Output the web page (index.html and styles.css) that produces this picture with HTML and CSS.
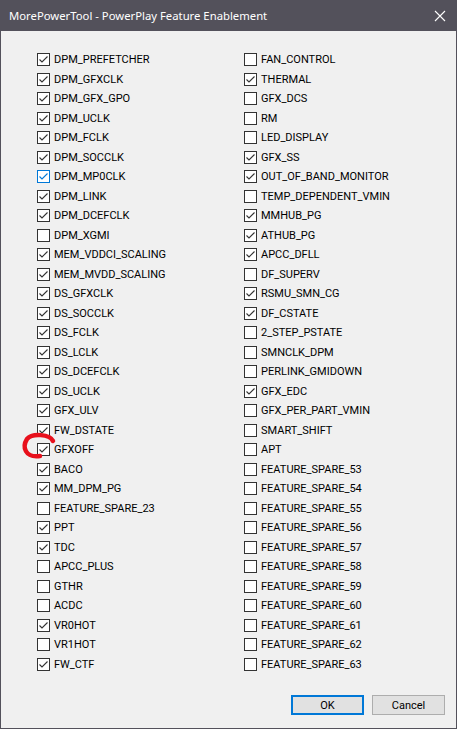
FILE: index.html
```html
<!doctype html>
<html lang="en">
<head>
  <meta charset="UTF-8" />
  <meta name="viewport" content="width=device-width, initial-scale=1.0" />
  <title>MorePowerTool - PowerPlay Feature Enablement</title>
  <link rel="stylesheet" href="styles.css">
</head>
<body>
<svg width="0" height="0" class="defs">
  <symbol id="tick" viewBox="0 0 11 11">
    <path d="M1.5 5.5 L4 8 L9.5 2.5" fill="none" stroke="currentColor" stroke-width="1.1" />
  </symbol>
</svg>
<div class="window">
  <div class="titlebar">
    <span class="title">MorePowerTool - PowerPlay Feature Enablement</span>
    <svg class="close" width="12" height="12" viewBox="0 0 12 12">
      <path d="M1 1 L11 11 M11 1 L1 11" stroke="#fff" stroke-width="1.1" />
    </svg>
  </div>
  <div class="features">
    <div class="column">
      <label class="item"><span class="cb on"><svg><use href="#tick"/></svg></span>DPM_PREFETCHER</label>
      <label class="item"><span class="cb on"><svg><use href="#tick"/></svg></span>DPM_GFXCLK</label>
      <label class="item"><span class="cb on"><svg><use href="#tick"/></svg></span>DPM_GFX_GPO</label>
      <label class="item"><span class="cb on"><svg><use href="#tick"/></svg></span>DPM_UCLK</label>
      <label class="item"><span class="cb on"><svg><use href="#tick"/></svg></span>DPM_FCLK</label>
      <label class="item"><span class="cb on"><svg><use href="#tick"/></svg></span>DPM_SOCCLK</label>
      <label class="item"><span class="cb on hover"><svg><use href="#tick"/></svg></span>DPM_MP0CLK</label>
      <label class="item"><span class="cb on"><svg><use href="#tick"/></svg></span>DPM_LINK</label>
      <label class="item"><span class="cb on"><svg><use href="#tick"/></svg></span>DPM_DCEFCLK</label>
      <label class="item"><span class="cb"></span>DPM_XGMI</label>
      <label class="item"><span class="cb on"><svg><use href="#tick"/></svg></span>MEM_VDDCI_SCALING</label>
      <label class="item"><span class="cb on"><svg><use href="#tick"/></svg></span>MEM_MVDD_SCALING</label>
      <label class="item"><span class="cb on"><svg><use href="#tick"/></svg></span>DS_GFXCLK</label>
      <label class="item"><span class="cb on"><svg><use href="#tick"/></svg></span>DS_SOCCLK</label>
      <label class="item"><span class="cb on"><svg><use href="#tick"/></svg></span>DS_FCLK</label>
      <label class="item"><span class="cb on"><svg><use href="#tick"/></svg></span>DS_LCLK</label>
      <label class="item"><span class="cb on"><svg><use href="#tick"/></svg></span>DS_DCEFCLK</label>
      <label class="item"><span class="cb on"><svg><use href="#tick"/></svg></span>DS_UCLK</label>
      <label class="item"><span class="cb on"><svg><use href="#tick"/></svg></span>GFX_ULV</label>
      <label class="item"><span class="cb on"><svg><use href="#tick"/></svg></span>FW_DSTATE</label>
      <label class="item"><span class="cb on"><svg><use href="#tick"/></svg></span>GFXOFF</label>
      <label class="item"><span class="cb on"><svg><use href="#tick"/></svg></span>BACO</label>
      <label class="item"><span class="cb on"><svg><use href="#tick"/></svg></span>MM_DPM_PG</label>
      <label class="item"><span class="cb"></span>FEATURE_SPARE_23</label>
      <label class="item"><span class="cb on"><svg><use href="#tick"/></svg></span>PPT</label>
      <label class="item"><span class="cb on"><svg><use href="#tick"/></svg></span>TDC</label>
      <label class="item"><span class="cb"></span>APCC_PLUS</label>
      <label class="item"><span class="cb"></span>GTHR</label>
      <label class="item"><span class="cb"></span>ACDC</label>
      <label class="item"><span class="cb on"><svg><use href="#tick"/></svg></span>VR0HOT</label>
      <label class="item"><span class="cb"></span>VR1HOT</label>
      <label class="item"><span class="cb on"><svg><use href="#tick"/></svg></span>FW_CTF</label>
    </div>
    <div class="column">
      <label class="item"><span class="cb"></span>FAN_CONTROL</label>
      <label class="item"><span class="cb on"><svg><use href="#tick"/></svg></span>THERMAL</label>
      <label class="item"><span class="cb"></span>GFX_DCS</label>
      <label class="item"><span class="cb"></span>RM</label>
      <label class="item"><span class="cb"></span>LED_DISPLAY</label>
      <label class="item"><span class="cb on"><svg><use href="#tick"/></svg></span>GFX_SS</label>
      <label class="item"><span class="cb on"><svg><use href="#tick"/></svg></span>OUT_OF_BAND_MONITOR</label>
      <label class="item"><span class="cb"></span>TEMP_DEPENDENT_VMIN</label>
      <label class="item"><span class="cb on"><svg><use href="#tick"/></svg></span>MMHUB_PG</label>
      <label class="item"><span class="cb on"><svg><use href="#tick"/></svg></span>ATHUB_PG</label>
      <label class="item"><span class="cb on"><svg><use href="#tick"/></svg></span>APCC_DFLL</label>
      <label class="item"><span class="cb"></span>DF_SUPERV</label>
      <label class="item"><span class="cb on"><svg><use href="#tick"/></svg></span>RSMU_SMN_CG</label>
      <label class="item"><span class="cb on"><svg><use href="#tick"/></svg></span>DF_CSTATE</label>
      <label class="item"><span class="cb"></span>2_STEP_PSTATE</label>
      <label class="item"><span class="cb"></span>SMNCLK_DPM</label>
      <label class="item"><span class="cb"></span>PERLINK_GMIDOWN</label>
      <label class="item"><span class="cb on"><svg><use href="#tick"/></svg></span>GFX_EDC</label>
      <label class="item"><span class="cb"></span>GFX_PER_PART_VMIN</label>
      <label class="item"><span class="cb"></span>SMART_SHIFT</label>
      <label class="item"><span class="cb"></span>APT</label>
      <label class="item"><span class="cb"></span>FEATURE_SPARE_53</label>
      <label class="item"><span class="cb"></span>FEATURE_SPARE_54</label>
      <label class="item"><span class="cb"></span>FEATURE_SPARE_55</label>
      <label class="item"><span class="cb"></span>FEATURE_SPARE_56</label>
      <label class="item"><span class="cb"></span>FEATURE_SPARE_57</label>
      <label class="item"><span class="cb"></span>FEATURE_SPARE_58</label>
      <label class="item"><span class="cb"></span>FEATURE_SPARE_59</label>
      <label class="item"><span class="cb"></span>FEATURE_SPARE_60</label>
      <label class="item"><span class="cb"></span>FEATURE_SPARE_61</label>
      <label class="item"><span class="cb"></span>FEATURE_SPARE_62</label>
      <label class="item"><span class="cb"></span>FEATURE_SPARE_63</label>
    </div>
  </div>
  <div class="buttons">
    <button class="btn default">OK</button>
    <button class="btn">Cancel</button>
  </div>
  <!-- hand-drawn marker around GFXOFF -->
  <svg class="marker" width="70" height="50" viewBox="0 0 70 50">
    <path d="M52 21 C49 14, 31 13, 26 19 C21 27, 24 38, 39 36" fill="none" stroke="#e8101c" stroke-width="4.5" stroke-linecap="round" />
  </svg>
</div>
</body>
</html>
```

FILE: styles.css
```css
body {
  margin: 0;
  font-family: Roboto, "Liberation Sans", sans-serif;
  font-size: 11px;
  color: #000;
}
.defs {
  position: absolute;
}
.window {
  position: relative;
  width: 457px;
  height: 729px;
  box-sizing: border-box;
  border: 1px solid #53515b;
  border-top: none;
  background-color: #f0f0f0;
  display: flex;
  flex-direction: column;
}
.titlebar {
  height: 31px;
  margin: 0 -1px;
  background-color: #53515b;
  display: flex;
  align-items: center;
  justify-content: space-between;
  padding: 0 10px 0 9px;
}
.title {
  font-family: "Noto Sans", sans-serif;
  font-size: 11.3px;
  color: #fff;
  padding-bottom: 1px;
}
.close {
  margin-right: 1px;
}
.features {
  display: grid;
  grid-template-columns: 207px 207px;
  padding: 19px 0 0 36px;
}
.column {
  display: flex;
  flex-direction: column;
}
.item {
  height: 19.5px;
  display: flex;
  align-items: center;
  gap: 4px;
  white-space: nowrap;
}
.cb {
  width: 13px;
  height: 13px;
  box-sizing: border-box;
  border: 1px solid #333;
  background-color: #fff;
  color: #333;
  flex: none;
}
.cb svg {
  display: block;
  width: 11px;
  height: 11px;
}
.cb.hover {
  border-color: #0078d7;
  color: #0078d7;
}
.buttons {
  display: flex;
  justify-content: flex-end;
  gap: 8px;
  padding: 21px 11px 0 0;
}
.btn {
  width: 73px;
  height: 20px;
  box-sizing: border-box;
  border: 1px solid #adadad;
  background-color: #e1e1e1;
  font-family: Roboto, "Liberation Sans", sans-serif;
  font-size: 11px;
  color: #000;
  padding: 0;
}
.btn.default {
  border: 2px solid #0078d7;
}
.marker {
  position: absolute;
  z-index: 2;
  left: 0;
  top: 420px;
}
```
